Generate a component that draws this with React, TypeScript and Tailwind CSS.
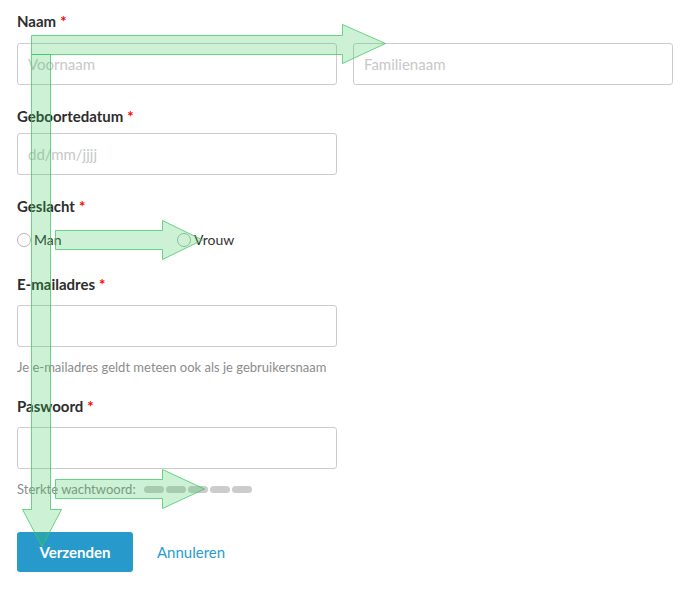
import React from "react";

const Req = () => <span className="ml-1 text-[#ff0000]">*</span>;

function Label({ children, className = "" }: { children: React.ReactNode; className?: string }) {
  return (
    <div className={`text-[15px] leading-[20px] font-bold text-[#2d2d2d] ${className}`}>
      {children}
      <Req />
    </div>
  );
}

function Field({ placeholder = "", className = "" }: { placeholder?: string; className?: string }) {
  return (
    <input
      className={`block w-[320px] h-[42px] rounded-[3px] border border-[#cccccc] bg-white px-[10px] text-[15px] text-[#333] placeholder:text-[#c8c8c8] outline-none ${className}`}
      placeholder={placeholder}
    />
  );
}

function Radio({ label, className = "" }: { label: string; className?: string }) {
  return (
    <label className={`flex items-center ${className}`}>
      <span className="mt-[-1px] mr-[3px] h-[14px] w-[14px] rounded-full border border-[#b3b3b3] bg-white" />
      <span className="text-[14px] leading-[20px] text-[#333]">{label}</span>
    </label>
  );
}

function Arrows() {
  const fill = "rgba(52,199,89,0.25)";
  const stroke = "rgba(60,200,95,0.75)";
  return (
    <svg className="pointer-events-none absolute left-0 top-0" width="694" height="595">
      <g fill={fill} stroke={stroke} strokeWidth="1">
        <polygon points="31.5,35.5 342.5,35.5 342.5,24.5 385.5,43.5 342.5,63.5 342.5,54.5 31.5,54.5" />
        <polygon points="31.5,54.5 50.5,54.5 50.5,509.5 61.5,509.5 42,546.5 22.5,509.5 31.5,509.5" />
        <polygon points="55.5,230.5 162.5,230.5 162.5,220.5 202.5,240 162.5,259.5 162.5,249.5 55.5,249.5" />
        <polygon points="55.5,479.5 162.5,479.5 162.5,469.5 204.5,489 162.5,508.5 162.5,498.5 55.5,498.5" />
      </g>
    </svg>
  );
}

export default function App() {
  return (
    <div className="relative h-[595px] w-[694px] overflow-hidden bg-white" style={{ fontFamily: "Lato, 'Open Sans', sans-serif" }}>
      <form className="flex flex-col pl-[17px] pt-[11px]">
        <Label>Naam</Label>
        <div className="mt-[12px] flex gap-[16px]">
          <Field placeholder="Voornaam" />
          <Field placeholder="Familienaam" />
        </div>

        <Label className="mt-[21px]">Geboortedatum</Label>
        <Field className="mt-[7px]" placeholder="dd/mm/jjjj" />

        <Label className="mt-[21px]">Geslacht</Label>
        <div className="mt-[14px] flex">
          <Radio label="Man" className="w-[160px]" />
          <Radio label="Vrouw" />
        </div>

        <Label className="mt-[24px]">E-mailadres</Label>
        <Field className="mt-[11px]" />
        <p className="mt-[11px] text-[13px] leading-[18px] text-[#8c8c8c]">
          Je e-mailadres geldt meteen ook als je gebruikersnaam
        </p>

        <Label className="mt-[20px]">Paswoord</Label>
        <Field className="mt-[11px]" />
        <div className="mt-[11px] flex items-center text-[13px] leading-[18px] text-[#8c8c8c]">
          <span>Sterkte wachtwoord:</span>
          <div className="ml-[8px] flex gap-[2px]">
            {[0, 1, 2, 3, 4].map((i) => (
              <span key={i} className="h-[7px] w-[20px] rounded-full bg-[#cccccc]" />
            ))}
          </div>
        </div>

        <div className="mt-[34px] flex items-center">
          <button
            type="button"
            className="h-[40px] w-[116px] rounded-[3px] bg-[#279acb] text-[15px] font-bold text-white"
          >
            Verzenden
          </button>
          <a className="ml-[24px] text-[15px] text-[#2a9ad2]" href="#">
            Annuleren
          </a>
        </div>
      </form>
      <Arrows />
    </div>
  );
}
